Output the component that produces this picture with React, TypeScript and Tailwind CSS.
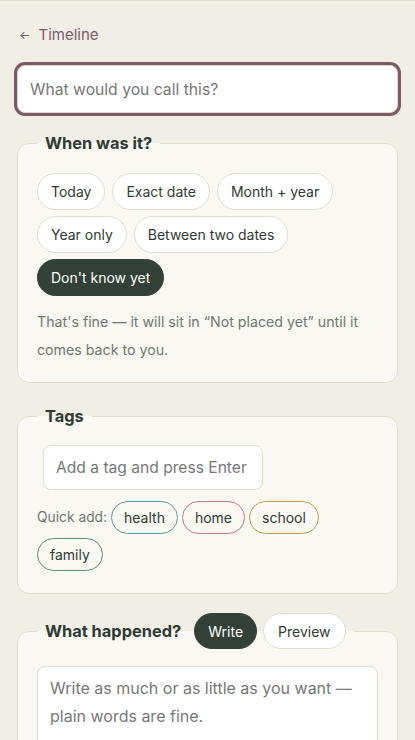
import React, { useState } from 'react';

const whenOptions = ['Today', 'Exact date', 'Month + year', 'Year only', 'Between two dates', "Don't know yet"];

const quickTags = [
  { name: 'health', cls: 'border-[#5a9c97]' },
  { name: 'home', cls: 'border-[#c27a86]' },
  { name: 'school', cls: 'border-[#c9a043]' },
  { name: 'family', cls: 'border-[#5e8d74]' },
];

export default function App() {
  const [when, setWhen] = useState("Don't know yet");
  const [mode, setMode] = useState<'write' | 'preview'>('write');

  return (
    <div className="min-h-screen bg-[#f1eee6] border-t border-[#e2ddd0] font-['Inter',sans-serif] text-[#2f3a33]">
      <div className="px-[17px] pt-6">
        {/* Back link */}
        <a href="#" className="flex items-center gap-2 px-0.5 text-[15px] leading-5 text-[#7a5a68]">
          <span className="text-[12px]">←</span>
          <span>Timeline</span>
        </a>

        {/* Title */}
        <input
          placeholder="What would you call this?"
          className="mt-5 block w-full h-12 rounded-lg border border-[#ddd6c6] bg-white px-3 text-[15.7px] outline-none shadow-[0_0_0_3px_#7c5a68] placeholder:text-[#777]"
        />

        {/* When */}
        <fieldset className="mt-[18px] rounded-xl border border-[#e2dccd] bg-[#f9f8f3] px-[19px] pt-[18px] pb-[18px]">
          <legend className="px-2 text-[16.4px] leading-6 font-bold text-[#2f3a33]">When was it?</legend>
          <div className="flex flex-wrap gap-x-[7px] gap-y-[6px]">
            {whenOptions.map((o) => (
              <button
                key={o}
                onClick={() => setWhen(o)}
                className={
                  when === o
                    ? 'h-[37px] rounded-full border border-[#334038] bg-[#334038] px-[13px] text-[14px] text-white'
                    : 'h-[37px] rounded-full border border-[#e2dccd] bg-white px-[13px] text-[14px] text-[#2f3a33]'
                }
              >
                {o}
              </button>
            ))}
          </div>
          <p className="mt-3 text-[14.2px] leading-7 text-[#6f786f]">
            That's fine — it will sit in “Not placed yet” until it comes back to you.
          </p>
        </fieldset>

        {/* Tags */}
        <fieldset className="mt-[21px] rounded-xl border border-[#e2dccd] bg-[#f9f8f3] px-[19px] pt-[17px] pb-[22px]">
          <legend className="px-2 text-[16.4px] leading-6 font-bold text-[#2f3a33]">Tags</legend>
          <input
            placeholder="Add a tag and press Enter"
            className="ml-[6px] block w-[220px] h-[45px] rounded-lg border border-[#e2dccd] bg-white px-3 text-[15.6px] outline-none placeholder:text-[#777]"
          />
          <div className="mt-[11px] flex flex-wrap items-center gap-1">
            <span className="text-[13.8px] text-[#6f786f]">Quick add:</span>
            {quickTags.map((t) => (
              <button
                key={t.name}
                className={`h-[33px] rounded-full border px-[12px] text-[14px] text-[#2f3a33] ${t.cls}`}
              >
                {t.name}
              </button>
            ))}
          </div>
        </fieldset>

        {/* What happened */}
        <fieldset className="mt-[19px] rounded-xl border border-[#e2dccd] bg-[#f9f8f3] px-[19px] pt-[17px] pb-5">
          <legend className="px-2">
            <div className="flex items-center gap-1.5">
              <span className="mr-[7px] text-[16.4px] font-bold text-[#2f3a33]">What happened?</span>
              <button
                onClick={() => setMode('write')}
                className={
                  mode === 'write'
                    ? 'h-9 rounded-full border border-[#334038] bg-[#334038] px-[13px] text-[14px] text-white'
                    : 'h-9 rounded-full border border-[#e2dccd] bg-white px-[13px] text-[14px] text-[#2f3a33]'
                }
              >
                Write
              </button>
              <button
                onClick={() => setMode('preview')}
                className={
                  mode === 'preview'
                    ? 'h-9 rounded-full border border-[#334038] bg-[#334038] px-[14px] text-[14px] text-white'
                    : 'h-9 rounded-full border border-[#e2dccd] bg-white px-[14px] text-[14px] text-[#2f3a33]'
                }
              >
                Preview
              </button>
            </div>
          </legend>
          <textarea
            placeholder="Write as much or as little as you want — plain words are fine."
            className="block w-full h-40 resize-none rounded-lg border border-[#e2dccd] bg-white px-3 py-[7px] text-[16px] leading-7 outline-none placeholder:text-[#777]"
          />
        </fieldset>
        <div className="h-8" />
      </div>
    </div>
  );
}
